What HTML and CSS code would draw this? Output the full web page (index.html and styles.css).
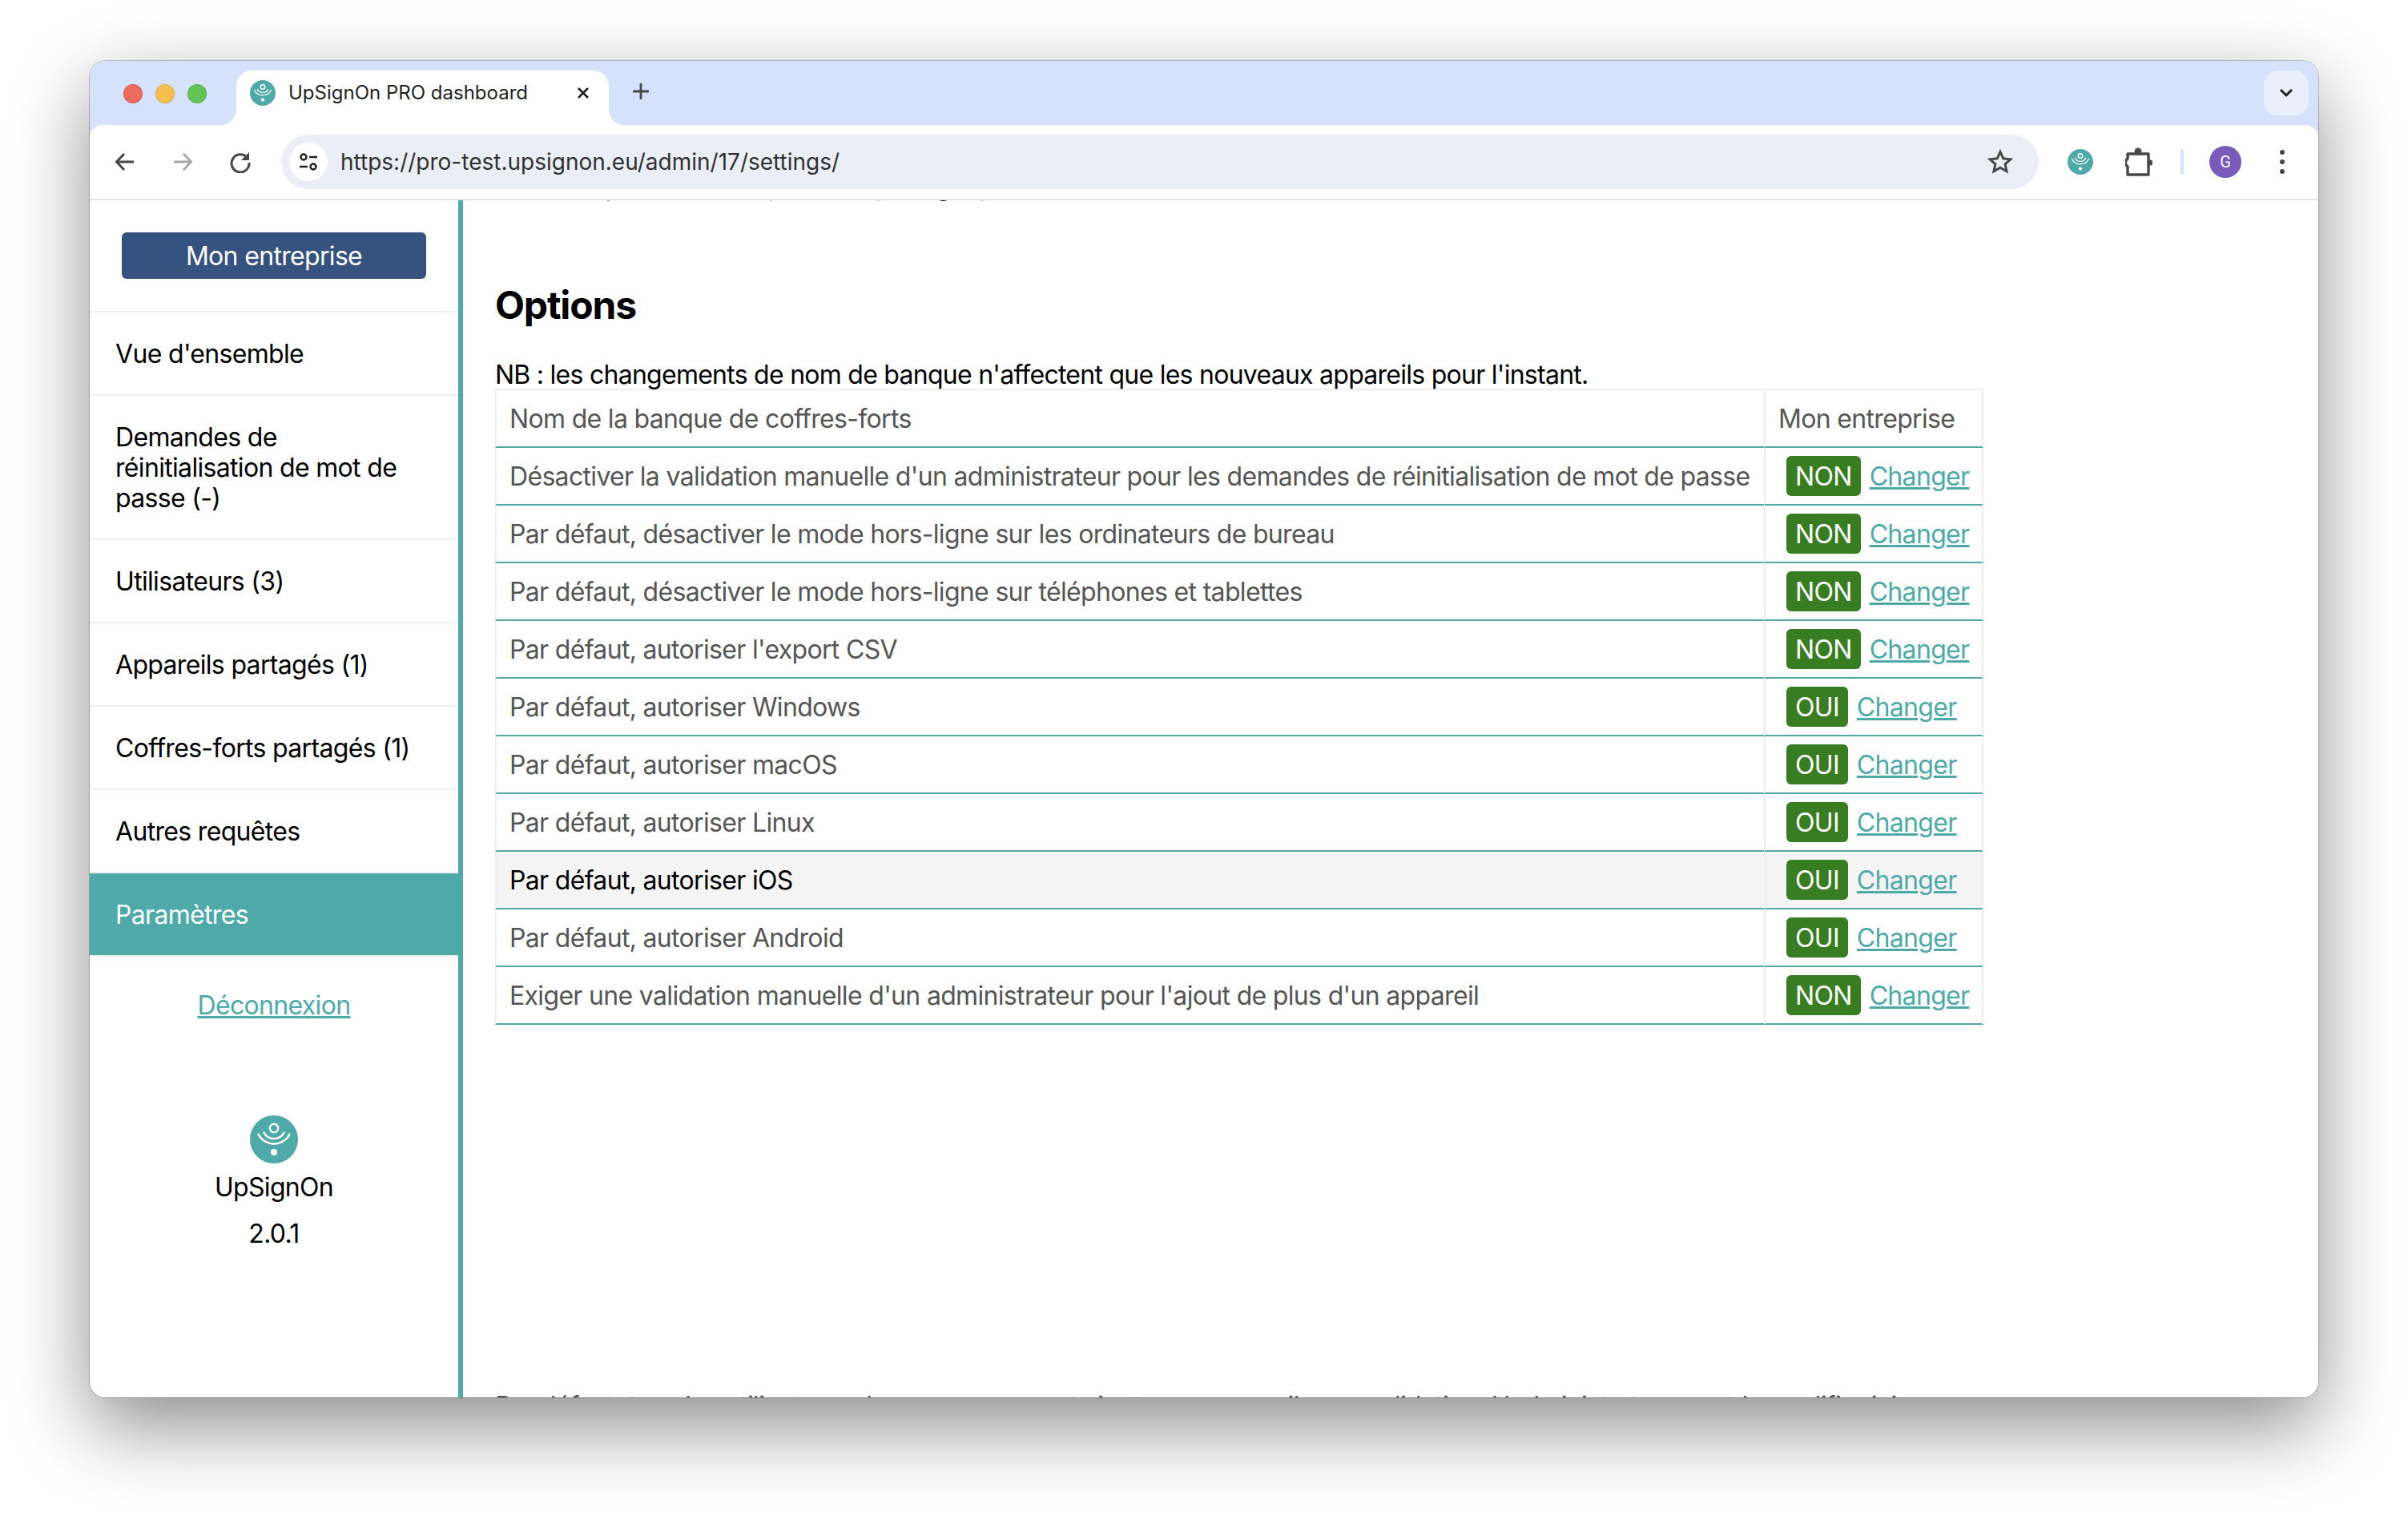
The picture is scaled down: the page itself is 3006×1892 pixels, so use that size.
FILE: index.html
```html
<!DOCTYPE html>
<html lang="fr">
<head>
  <meta charset="UTF-8">
  <title>UpSignOn PRO dashboard</title>
  <link rel="stylesheet" href="styles.css">
</head>
<body>
  <svg class="defs" width="0" height="0">
    <symbol id="logo" viewBox="0 0 60 60">
      <circle cx="30" cy="30" r="30" fill="#4fa9a8"/>
      <g fill="none" stroke="#fff" stroke-width="2.4" stroke-linecap="round">
        <circle cx="30" cy="16" r="5.2"/>
        <path d="M17.500 21.500C20 26.500 25 29 30 29S40 26.500 42.500 21.500"/>
        <path d="M10.500 23.500C14 31 22 35.500 30 35.500S46 31 49.500 23.500"/>
      </g>
      <circle cx="30" cy="46" r="4" fill="#fff"/>
    </symbol>
  </svg>

  <div class="window">
    <div class="titlebar">
      <div class="traffic">
        <span class="light red"></span>
        <span class="light yellow"></span>
        <span class="light green"></span>
      </div>
      <div class="tab">
        <svg class="favicon"><use href="#logo"/></svg>
        <span class="tab-title">UpSignOn PRO dashboard</span>
        <svg class="tab-close" viewBox="0 0 16 16"><path d="M2 2l12 12M14 2L2 14"/></svg>
      </div>
      <svg class="new-tab" viewBox="0 0 20 20"><path d="M10 1v18M1 10h18"/></svg>
      <div class="tab-list">
        <svg viewBox="0 0 18 12"><path d="M2 2l7 7 7-7"/></svg>
      </div>
    </div>

    <div class="toolbar">
      <svg class="nav-icon" viewBox="0 0 28 28"><path d="M25 14H4M13 4L3.500 14 13 24"/></svg>
      <svg class="nav-icon off" viewBox="0 0 28 28"><path d="M3 14h21M15 4l9.500 10L15 24"/></svg>
      <svg class="nav-icon" viewBox="0 0 28 28"><path d="M23 9.500A11 11 0 1 0 25 15"/><path class="solid" d="M25 2v10H15z"/></svg>
      <div class="urlbar">
        <span class="site-info">
          <svg viewBox="0 0 24 24"><circle cx="6" cy="6" r="3.500"/><path d="M13 6h10M1 18h10"/><circle cx="18" cy="18" r="3.500"/></svg>
        </span>
        <span class="url">https://pro-test.upsignon.eu/admin/17/settings/</span>
        <svg class="star" viewBox="0 0 32 32"><path d="M16 3.500l3.800 8.300 9 1-6.700 6.100 1.900 8.900-8-4.600-8 4.600 1.900-8.900-6.700-6.100 9-1z"/></svg>
      </div>
      <svg class="ext-logo"><use href="#logo"/></svg>
      <svg class="puzzle" viewBox="0 0 34 38">
        <path d="M3 9H29V35H3V25a6 6 0 0 1 0-10z"/>
        <circle cx="16" cy="6" r="4.500"/>
        <circle cx="31" cy="20" r="3.500"/>
      </svg>
      <span class="separator"></span>
      <span class="avatar">G</span>
      <div class="kebab"><span></span><span></span><span></span></div>
    </div>

    <div class="app">
      <nav class="sidebar">
        <div class="company-wrap"><a class="company-btn">Mon entreprise</a></div>
        <a class="nav-item">Vue d'ensemble</a>
        <a class="nav-item">Demandes de réinitialisation de mot de passe (-)</a>
        <a class="nav-item">Utilisateurs (3)</a>
        <a class="nav-item">Appareils partagés (1)</a>
        <a class="nav-item">Coffres-forts partagés (1)</a>
        <a class="nav-item">Autres requêtes</a>
        <a class="nav-item active">Paramètres</a>
        <a class="logout">Déconnexion</a>
        <div class="brand">
          <svg class="brand-logo"><use href="#logo"/></svg>
          <div class="brand-name">UpSignOn</div>
          <div class="brand-version">2.0.1</div>
        </div>
      </nav>

      <main class="content">
        <p class="clipped-top">Durée en jours restant que toute partage, prenne fin</p>
        <h2>Options</h2>
        <div class="note">NB : les changements de nom de banque n'affectent que les nouveaux appareils pour l'instant.</div>
        <table class="settings">
          <tr><td>Nom de la banque de coffres-forts</td><td>Mon entreprise</td></tr>
          <tr><td>Désactiver la validation manuelle d'un administrateur pour les demandes de réinitialisation de mot de passe</td><td><span class="badge">NON</span><a class="change">Changer</a></td></tr>
          <tr><td>Par défaut, désactiver le mode hors-ligne sur les ordinateurs de bureau</td><td><span class="badge">NON</span><a class="change">Changer</a></td></tr>
          <tr><td>Par défaut, désactiver le mode hors-ligne sur téléphones et tablettes</td><td><span class="badge">NON</span><a class="change">Changer</a></td></tr>
          <tr><td>Par défaut, autoriser l'export CSV</td><td><span class="badge">NON</span><a class="change">Changer</a></td></tr>
          <tr><td>Par défaut, autoriser Windows</td><td><span class="badge">OUI</span><a class="change">Changer</a></td></tr>
          <tr><td>Par défaut, autoriser macOS</td><td><span class="badge">OUI</span><a class="change">Changer</a></td></tr>
          <tr><td>Par défaut, autoriser Linux</td><td><span class="badge">OUI</span><a class="change">Changer</a></td></tr>
          <tr class="hover"><td>Par défaut, autoriser iOS</td><td><span class="badge">OUI</span><a class="change">Changer</a></td></tr>
          <tr><td>Par défaut, autoriser Android</td><td><span class="badge">OUI</span><a class="change">Changer</a></td></tr>
          <tr><td>Exiger une validation manuelle d'un administrateur pour l'ajout de plus d'un appareil</td><td><span class="badge">NON</span><a class="change">Changer</a></td></tr>
        </table>
        <p class="clipped-bottom">Par défaut, tous les utilisateurs du groupe peuvent ajouter un appareil sans validation. L'administrateur peut le modifier ici</p>
      </main>
    </div>
  </div>
</body>
</html>
```

FILE: styles.css
```css
* {
  box-sizing: border-box;
}

html, body {
  margin: 0;
  height: 100%;
  overflow: hidden;
  background: #fff;
}

body {
  padding: 76px 0 0 112px;
  font-family: Inter, "Liberation Sans", sans-serif;
  font-size: 32px;
  line-height: 38px;
  letter-spacing: -0.021em;
  color: #000;
}

.defs {
  position: absolute;
}

/* ombre sur un calque separe car .window coupe ses enfants */
body::before {
  content: "";
  position: absolute;
  left: 112px;
  top: 76px;
  width: 2782px;
  height: 1668px;
  border-radius: 20px;
  box-shadow: 0 36px 96px rgba(0, 0, 0, 0.45), 0 0 0 1px rgba(0, 0, 0, 0.22);
}

.window {
  position: relative;
  width: 2782px;
  height: 1668px;
  display: flex;
  flex-direction: column;
  border-radius: 20px;
  background: #d6e2fb;
  overflow: hidden;
}

/* barre d'onglets */
.titlebar {
  height: 80px;
  flex: none;
  display: flex;
  align-items: flex-start;
  letter-spacing: 0;
}

.traffic {
  display: flex;
  gap: 16px;
  padding: 29px 0 0 42px;
  width: 183px;
}

.light {
  width: 24px;
  height: 24px;
  border-radius: 50%;
  border: 1px solid rgba(0, 0, 0, 0.12);
}

.red { background: #ed6a5e; }
.yellow { background: #f5bf4f; }
.green { background: #61c454; }

.tab {
  position: relative;
  width: 465px;
  height: 68px;
  margin-top: 12px;
  padding: 0 24px 12px 17px;
  display: flex;
  align-items: center;
  background: #fff;
  border-radius: 20px 20px 0 0;
}

.tab::before,
.tab::after {
  content: "";
  position: absolute;
  bottom: 0;
  width: 20px;
  height: 20px;
}

.tab::before {
  left: -20px;
  background: radial-gradient(circle at 0 0, #d6e2fb 20px, #fff 20.5px);
}

.tab::after {
  right: -20px;
  background: radial-gradient(circle at 100% 0, #d6e2fb 20px, #fff 20.5px);
}

.favicon {
  width: 32px;
  height: 32px;
  flex: none;
}

.tab-title {
  margin-left: 16px;
  font-size: 24px;
  line-height: 32px;
  color: #1f1f1f;
  white-space: nowrap;
  flex: 1;
}

.tab-close {
  width: 16px;
  height: 16px;
  fill: none;
  stroke: #1f1f1f;
  stroke-width: 2.6;
}

.new-tab {
  width: 22px;
  height: 22px;
  margin: 27px 0 0 29px;
  fill: none;
  stroke: #474747;
  stroke-width: 2.6;
}

.tab-list {
  width: 56px;
  height: 56px;
  margin: 12px 12px 0 auto;
  display: flex;
  align-items: center;
  justify-content: center;
  background: #e9f0fc;
  border-radius: 18px;
}

.tab-list svg {
  width: 18px;
  height: 12px;
  fill: none;
  stroke: #1f1f1f;
  stroke-width: 3;
}

/* barre d'adresse */
.toolbar {
  height: 94px;
  flex: none;
  display: flex;
  align-items: center;
  padding-left: 30px;
  background: #fff;
  border-bottom: 2px solid #e2e2e2;
  border-radius: 16px 16px 0 0;
  letter-spacing: 0;
}

.nav-icon {
  width: 28px;
  height: 28px;
  margin-right: 44px;
  fill: none;
  stroke: #474747;
  stroke-width: 3;
  flex: none;
}

.nav-icon.off {
  stroke: #a9a9a9;
}

.nav-icon .solid {
  fill: #474747;
  stroke: none;
}

.urlbar {
  width: 2194px;
  height: 68px;
  margin-left: -7px;
  flex: none;
  display: flex;
  align-items: center;
  padding: 0 32px 0 10px;
  background: #ebeef7;
  border-radius: 34px;
}

.site-info {
  width: 48px;
  height: 48px;
  flex: none;
  display: flex;
  align-items: center;
  justify-content: center;
  background: #fff;
  border-radius: 50%;
}

.site-info svg {
  width: 24px;
  height: 24px;
  fill: none;
  stroke: #1f1f1f;
  stroke-width: 2.4;
}

.url {
  flex: 1;
  margin-left: 16px;
  font-size: 28px;
  color: #303030;
  white-space: nowrap;
}

.star {
  width: 32px;
  height: 32px;
  fill: none;
  stroke: #474747;
  stroke-width: 3;
}

.ext-logo {
  width: 32px;
  height: 32px;
  margin-left: 36px;
  flex: none;
}

.puzzle {
  width: 34px;
  height: 38px;
  margin-left: 40px;
  flex: none;
  fill: #474747;
}

.puzzle path {
  fill: none;
  stroke: #474747;
  stroke-width: 3.4;
  stroke-linejoin: round;
}

.separator {
  width: 4px;
  height: 32px;
  margin-left: 35px;
  flex: none;
  background: #d6e2fb;
  border-radius: 2px;
}

.avatar {
  width: 40px;
  height: 40px;
  margin-left: 32px;
  flex: none;
  display: flex;
  align-items: center;
  justify-content: center;
  background: #7a5bb9;
  border-radius: 50%;
  color: #fff;
  font-family: Roboto, sans-serif;
  font-size: 20px;
}

.kebab {
  display: flex;
  flex-direction: column;
  gap: 6px;
  margin-left: 48px;
}

.kebab span {
  width: 6px;
  height: 6px;
  border-radius: 50%;
  background: #474747;
}

/* application */
.app {
  flex: 1;
  min-height: 0;
  display: flex;
  background: #fff;
}

.sidebar {
  width: 466px;
  flex: none;
  border-right: 6px solid #4fa9a8;
  display: flex;
  flex-direction: column;
}

.company-wrap {
  padding: 40px;
  height: 138px;
}

.company-btn {
  display: block;
  height: 58px;
  line-height: 60px;
  text-align: center;
  background: #36527f;
  color: #fff;
  border-radius: 6px;
}

.nav-item {
  display: block;
  padding: 33px 32px 31px;
  border-top: 2px solid #f0f0f0;
}

.nav-item.active {
  height: 106px;
  background: #4fa9a8;
  background-clip: padding-box;
  color: #fff;
  border-bottom: 2px solid #f0f0f0;
}

.logout {
  margin-top: 42px;
  text-align: center;
  color: #4fa9a8;
  text-decoration: underline;
}

.brand {
  margin-top: 118px;
  display: flex;
  flex-direction: column;
  align-items: center;
}

.brand-logo {
  width: 60px;
  height: 60px;
}

.brand-name {
  margin-top: 11px;
}

.brand-version {
  margin-top: 20px;
}

/* contenu */
.content {
  flex: 1;
  min-width: 0;
  padding-left: 40px;
  overflow: hidden;
}

.clipped-top {
  margin: -36px 0 0;
  white-space: nowrap;
}

.content h2 {
  margin: 100px 0 0;
  font-size: 48px;
  line-height: 58px;
  font-weight: 700;
  letter-spacing: -0.024em;
}

.note {
  margin-top: 39px;
  height: 38px;
  letter-spacing: -0.023em;
}

.settings {
  width: 1858px;
  margin-top: -2px;
  table-layout: fixed;
  border-collapse: separate;
  border-spacing: 0;
  color: #555;
}

.settings td {
  height: 72px;
  padding: 2px 16px 0;
  border-left: 2px solid #eee;
  border-bottom: 2px solid #4fa9a8;
  white-space: nowrap;
}

.settings td:last-child {
  width: 274px;
  padding-top: 0;
  border-right: 2px solid #eee;
}

.settings tr:first-child td {
  height: 74px;
  padding-top: 2px;
  border-top: 2px solid #eee;
}

.settings tr.hover td {
  background: #f4f4f4;
}

.settings tr.hover td:first-child {
  color: #000;
}

.badge {
  display: inline-block;
  height: 50px;
  line-height: 52px;
  margin: 0 11px 0 10px;
  padding: 0 11px;
  background: #397d22;
  color: #fff;
  border-radius: 6px;
  vertical-align: middle;
}

.change {
  display: inline-block;
  padding-top: 2px;
  color: #4fa9a8;
  text-decoration: underline;
  vertical-align: middle;
}

.clipped-bottom {
  margin: 457px 0 0;
  white-space: nowrap;
  color: #555;
}
```
